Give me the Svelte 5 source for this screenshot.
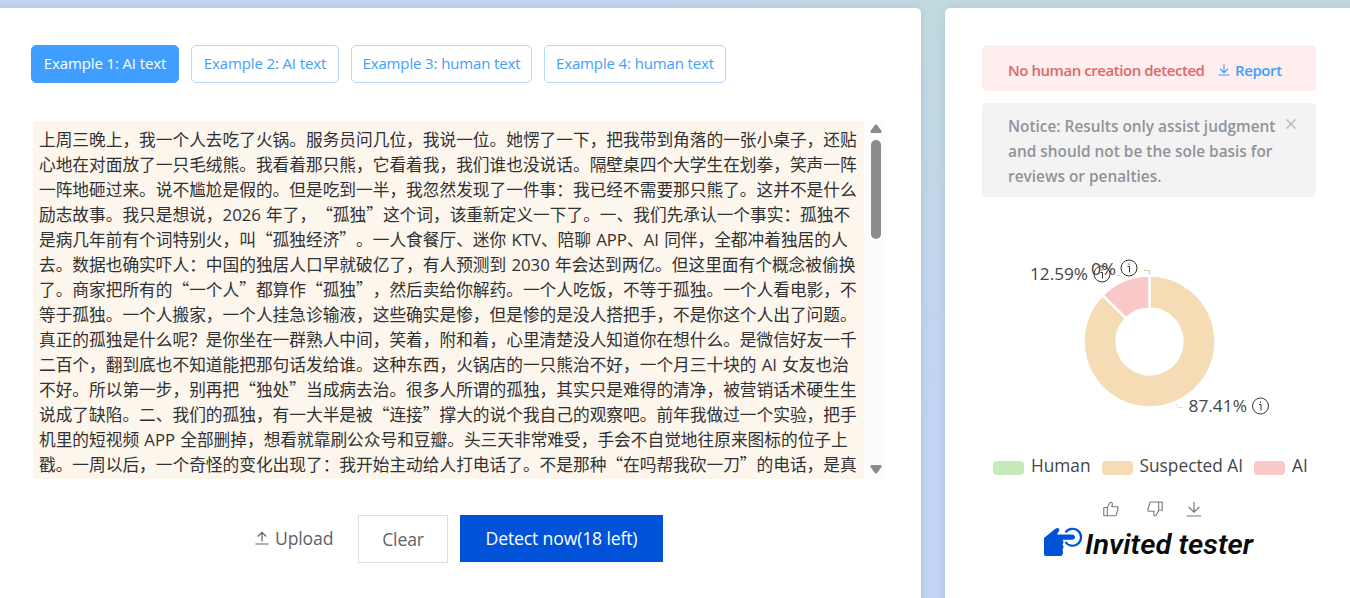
<script>
    const examples = [
        'Example 1: AI text',
        'Example 2: AI text',
        'Example 3: human text',
        'Example 4: human text'
    ];

    let activeExample = 0;
    let noticeOpen = true;

    const lines = [
        '上周三晚上，我一个人去吃了火锅。服务员问几位，我说一位。她愣了一下，把我带到角落的一张小桌子，还贴',
        '心地在对面放了一只毛绒熊。我看着那只熊，它看着我，我们谁也没说话。隔壁桌四个大学生在划拳，笑声一阵',
        '一阵地砸过来。说不尴尬是假的。但是吃到一半，我忽然发现了一件事：我已经不需要那只熊了。这并不是什么',
        '励志故事。我只是想说，2026 年了，“孤独”这个词，该重新定义一下了。一、我们先承认一个事实：孤独不',
        '是病几年前有个词特别火，叫“孤独经济”。一人食餐厅、迷你 KTV、陪聊 APP、AI 同伴，全都冲着独居的人',
        '去。数据也确实吓人：中国的独居人口早就破亿了，有人预测到 2030 年会达到两亿。但这里面有个概念被偷换',
        '了。商家把所有的“一个人”都算作“孤独”，然后卖给你解药。一个人吃饭，不等于孤独。一个人看电影，不',
        '等于孤独。一个人搬家，一个人挂急诊输液，这些确实是惨，但是惨的是没人搭把手，不是你这个人出了问题。',
        '真正的孤独是什么呢？是你坐在一群熟人中间，笑着，附和着，心里清楚没人知道你在想什么。是微信好友一千',
        '二百个，翻到底也不知道能把那句话发给谁。这种东西，火锅店的一只熊治不好，一个月三十块的 AI 女友也治',
        '不好。所以第一步，别再把“独处”当成病去治。很多人所谓的孤独，其实只是难得的清净，被营销话术硬生生',
        '说成了缺陷。二、我们的孤独，有一大半是被“连接”撑大的说个我自己的观察吧。前年我做过一个实验，把手',
        '机里的短视频 APP 全部删掉，想看就靠刷公众号和豆瓣。头三天非常难受，手会不自觉地往原来图标的位子上',
        '戳。一周以后，一个奇怪的变化出现了：我开始主动给人打电话了。不是那种“在吗帮我砍一刀”的电话，是真'
    ];

    // latin words and digits get their own font
    const parts = (line) => line.split(/( ?[A-Za-z0-9]+ ?)/).filter(Boolean);
    const isLatin = (part) => /[A-Za-z0-9]/.test(part);

    const legend = [
        { name: 'Human', color: '#c8e9b8' },
        { name: 'Suspected AI', color: '#f5dcb5' },
        { name: 'AI', color: '#fac8c8' }
    ];

    function arc(from, to, outer = 66, inner = 32.8) {
        const point = (share, r) => {
            const angle = share * Math.PI * 2;
            return `${(r * Math.sin(angle)).toFixed(2)} ${(-r * Math.cos(angle)).toFixed(2)}`;
        };
        const large = to - from > 0.5 ? 1 : 0;
        return `M${point(from, outer)}A${outer} ${outer} 0 ${large} 1 ${point(to, outer)}L${point(to, inner)}A${inner} ${inner} 0 ${large} 0 ${point(from, inner)}Z`;
    }

    const slices = [
        { color: '#f5dcb5', d: arc(0, 0.8741) },
        { color: '#fac8c8', d: arc(0.8741, 1) }
    ];
</script>

<div class="page">
    <main class="card editor">
        <div class="examples">
            {#each examples as example, i}
                <button class="example" class:active={i === activeExample} on:click={() => (activeExample = i)}>{example}</button>
            {/each}
        </div>

        <div class="text-area">
            <div class="text">
                {#each lines as line}
                    <div class="line">{#each parts(line) as part}<span class:latin={isLatin(part)}>{part}</span>{/each}</div>
                {/each}
            </div>
            <div class="scrollbar">
                <svg width="12" height="9" viewBox="0 0 12 9"><path d="M5 .8Q6 0 7 .8L11.5 7Q12 8.5 10.8 9H1.2Q0 8.5 .5 7Z" fill="#8b8b8b" /></svg>
                <div class="thumb"></div>
                <svg class="down" width="12" height="9" viewBox="0 0 12 9"><path d="M5 8.2Q6 9 7 8.2L11.5 2Q12 .5 10.8 0H1.2Q0 .5 .5 2Z" fill="#8b8b8b" /></svg>
            </div>
        </div>

        <div class="actions">
            <button class="upload">
                <svg width="14" height="14" viewBox="0 0 14 14" fill="none" stroke="#606266" stroke-width="1.2"><path d="M.5 13H13.5M7 10.5V1.5M2.8 5.5L7 1.3L11.2 5.5" /></svg>
                <span>Upload</span>
            </button>
            <button class="clear">Clear</button>
            <button class="detect">Detect now(18 left)</button>
        </div>
    </main>

    <aside class="card result">
        <div class="alert danger">
            <span class="verdict">No human creation detected</span>
            <svg width="12" height="12" viewBox="0 0 12 12" fill="none" stroke="#409eff" stroke-width="1.2"><path d="M.3 11H11.7M6 .5V8.5M2 4.8L6 8.6L10 4.8" /></svg>
            <span class="report">Report</span>
        </div>

        {#if noticeOpen}
            <div class="alert info">
                <p>Notice: Results only assist judgment<br />and should not be the sole basis for<br />reviews or penalties.</p>
                <button class="close" aria-label="Close" on:click={() => (noticeOpen = false)}>
                    <svg width="10" height="10" viewBox="0 0 10 10" stroke="#b0b2b6" stroke-width="1.1"><path d="M.5 .5L9.5 9.5M9.5 .5L.5 9.5" /></svg>
                </button>
            </div>
        {/if}

        <svg class="chart" width="334" height="200" viewBox="982 240 334 200">
            <g transform="translate(1149.5 341.5)" stroke="#fff" stroke-width="2.5">
                {#each slices as slice}
                    <path d={slice.d} fill={slice.color} />
                {/each}
            </g>
            <g fill="none" stroke-width="1">
                <path d="M1144 270.5H1149.5V275" stroke="#b5e3a0" />
                <path d="M1117 275.5H1120L1123 279" stroke="#fac8c8" />
                <path d="M1175.5 403L1177.5 407.5H1183" stroke="#f5dcb5" />
            </g>
            <g class="labels">
                <text x="1091" y="274.5" textLength="25" lengthAdjust="spacingAndGlyphs">0%</text>
                <text x="1030" y="280" textLength="58" lengthAdjust="spacingAndGlyphs">12.59%</text>
                <text x="1188.5" y="412" textLength="58.5" lengthAdjust="spacingAndGlyphs">87.41%</text>
            </g>
            {#each [[1129, 268], [1102, 274], [1260.5, 406]] as [x, y]}
                <g transform="translate({x} {y})" fill="none" stroke="#333" stroke-width="1">
                    <circle r="8" />
                    <path d="M-1.5 -1.5H.5V4.5M0 -4.5V-3.2" />
                </g>
            {/each}
        </svg>

        <div class="legend">
            {#each legend as item}
                <span class="item"><i style="background: {item.color}"></i><span>{item.name}</span></span>
            {/each}
        </div>

        <div class="feedback">
            <svg width="16" height="16" viewBox="0 0 16 16" fill="none" stroke="#777" stroke-width="1.1" stroke-linejoin="round"><path d="M.8 6.5H4.3V14.8H.8ZM4.3 6.5L7.2 1.2Q9.6 1 9.3 3.5L8.8 5.7H14.5Q15.3 6 15.1 7L13.2 14.1Q13 14.8 12 14.8H4.3" /></svg>
            <svg width="16" height="16" viewBox="0 0 16 16" fill="none" stroke="#777" stroke-width="1.1" stroke-linejoin="round"><path d="M15.2 9.3H11.7V1H15.2ZM11.7 9.3L8.8 14.8Q6.4 15 6.7 12.5L7.2 10.2H1.5Q.7 9.8 .9 8.8L2.8 1.8Q3 1 4 1H11.7" /></svg>
            <svg class="save" width="16" height="16" viewBox="0 0 16 16" fill="none" stroke="#777" stroke-width="1.2"><path d="M.8 15H15.2M8 1V11M2.7 6L8 11.2L13.3 6" /></svg>
        </div>

        <svg class="invite" width="232" height="44" viewBox="1043 520 232 44">
            <path d="M1044 538L1055 529Q1059 526.5 1059.5 530L1057 534.5H1072Q1075 535 1075 537.3Q1075 539.5 1072 539.8H1062.5Q1064.5 542 1062.5 544.5Q1064.5 547 1062.5 549.5Q1064 553 1061.5 556H1046Q1044 556 1044 554Z" fill="#0052d9" />
            <path d="M1065.5 532.5A8.5 8.5 0 1 1 1065.5 542" fill="none" stroke="#0052d9" stroke-width="2.2" />
            <text x="1085" y="554" textLength="168" lengthAdjust="spacingAndGlyphs">Invited tester</text>
        </svg>
    </aside>
</div>

<style>
    :global(body) {
        margin: 0;
        overflow: hidden;
    }

    .page {
        display: flex;
        gap: 24px;
        box-sizing: border-box;
        height: 598px;
        padding-top: 8px;
        overflow: hidden;
        font-family: "Open Sans", "Noto Sans", "Noto Sans CJK SC", sans-serif;
        background:
            linear-gradient(to bottom, rgba(194, 211, 245, 0) 20px, #c2d3f5 420px),
            linear-gradient(to right, #c1d6f3 0, #c1d6f3 600px, #c1dae0 930px, #c1dae0 100%);
    }

    .card {
        box-sizing: border-box;
        height: 610px;
        background: #fff;
        box-shadow: 0 0 10px rgba(0, 0, 0, 0.1);
    }

    .editor {
        flex: none;
        width: 921px;
        padding: 37px 31px 0;
        border-radius: 0 5px 0 0;
    }

    .result {
        flex: none;
        display: flex;
        flex-direction: column;
        width: 420px;
        padding: 37px 49px 0 37px;
        border-radius: 5px 0 0 0;
    }

    button {
        padding: 0;
        border: 0;
        background: none;
        font-family: inherit;
        white-space: nowrap;
        cursor: pointer;
    }

    .examples {
        display: flex;
        gap: 12px;
    }

    .example {
        box-sizing: border-box;
        width: 148px;
        height: 38px;
        padding-bottom: 2px;
        border: 1px solid #b3d8ff;
        border-radius: 5px;
        color: #409eff;
        font-size: 15px;
        font-weight: 500;
        letter-spacing: -0.13px;
    }

    .example:nth-child(3) {
        width: 181px;
    }

    .example:nth-child(4) {
        width: 182px;
    }

    .example.active {
        border-color: #409eff;
        background: #409eff;
        color: #fff;
    }

    .text-area {
        display: flex;
        height: 358px;
        margin: 38px 0 0 2px;
    }

    .text {
        box-sizing: border-box;
        width: 831px;
        padding: 6px 0 0 6px;
        overflow: hidden;
        background: #fdf6ec;
        color: #303133;
        font-family: "Noto Sans CJK SC", sans-serif;
        font-size: 16.69px;
        line-height: 25px;
        text-spacing-trim: space-all;
    }

    .line {
        height: 25px;
        white-space: pre;
    }

    .latin {
        font-family: "Open Sans", "Noto Sans", sans-serif;
        font-size: 16.8px;
        word-spacing: 0.8px;
    }

    .scrollbar {
        display: flex;
        flex-direction: column;
        align-items: center;
        box-sizing: border-box;
        width: 21px;
        padding: 3px 0 5px 3px;
        background: #fcfcfc;
    }

    .thumb {
        width: 10px;
        height: 99px;
        margin-top: 7px;
        border-radius: 5px;
        background: #8b8b8b;
    }

    .scrollbar .down {
        margin-top: auto;
    }

    .actions {
        display: flex;
        align-items: flex-start;
        margin: 36px 0 0 224px;
    }

    .actions button {
        padding-bottom: 1px;
        color: #606266;
        font-size: 17.6px;
        letter-spacing: -0.15px;
    }

    .actions .upload {
        display: flex;
        align-items: center;
        gap: 6px;
        width: 103px;
        height: 47px;
    }

    .actions .clear {
        box-sizing: border-box;
        width: 90px;
        height: 48px;
        border: 1px solid #dcdfe6;
    }

    .actions .detect {
        width: 203px;
        height: 47px;
        margin-left: 12px;
        background: #0052d9;
        color: #fff;
    }

    .alert {
        display: flex;
        box-sizing: border-box;
        width: 334px;
        border-radius: 5px;
        font-size: 15px;
        font-weight: 600;
    }

    .danger {
        align-items: center;
        height: 46px;
        padding: 4px 0 0 26px;
        background: #feeeee;
        color: #e0676a;
    }

    .verdict {
        width: 210px;
        letter-spacing: -0.45px;
        white-space: nowrap;
    }

    .report {
        margin-left: 5px;
        color: #409eff;
        letter-spacing: -0.4px;
    }

    .info {
        height: 94px;
        margin-top: 12px;
        padding: 11px 0 0 26px;
        background: #f3f3f4;
        color: #909399;
        font-size: 15.4px;
    }

    .info p {
        width: 278px;
        margin: 0;
        line-height: 25px;
        white-space: nowrap;
    }

    .close {
        display: flex;
        height: 10px;
        margin-top: 5px;
    }

    .chart {
        flex: none;
        margin-top: 43px;
    }

    .labels {
        fill: #464646;
        font-size: 17px;
    }

    .legend {
        display: flex;
        gap: 11px;
        height: 26px;
        margin: 13px 0 0 11px;
        color: #464646;
        font-size: 17.3px;
        line-height: 26px;
        white-space: nowrap;
    }

    .item {
        display: flex;
        align-items: center;
        gap: 7px;
    }

    .item i {
        width: 31px;
        height: 14px;
        margin-top: 3px;
        border-radius: 4px;
    }

    .feedback {
        display: flex;
        gap: 28px;
        margin: 22px 0 0 121px;
    }

    .save {
        margin-left: -5px;
    }

    .invite {
        flex: none;
        margin: 3px 0 0 61px;
    }

    .invite text {
        fill: #0b0b0b;
        font-family: Roboto, sans-serif;
        font-size: 28px;
        font-style: italic;
        font-weight: 600;
    }
</style>
